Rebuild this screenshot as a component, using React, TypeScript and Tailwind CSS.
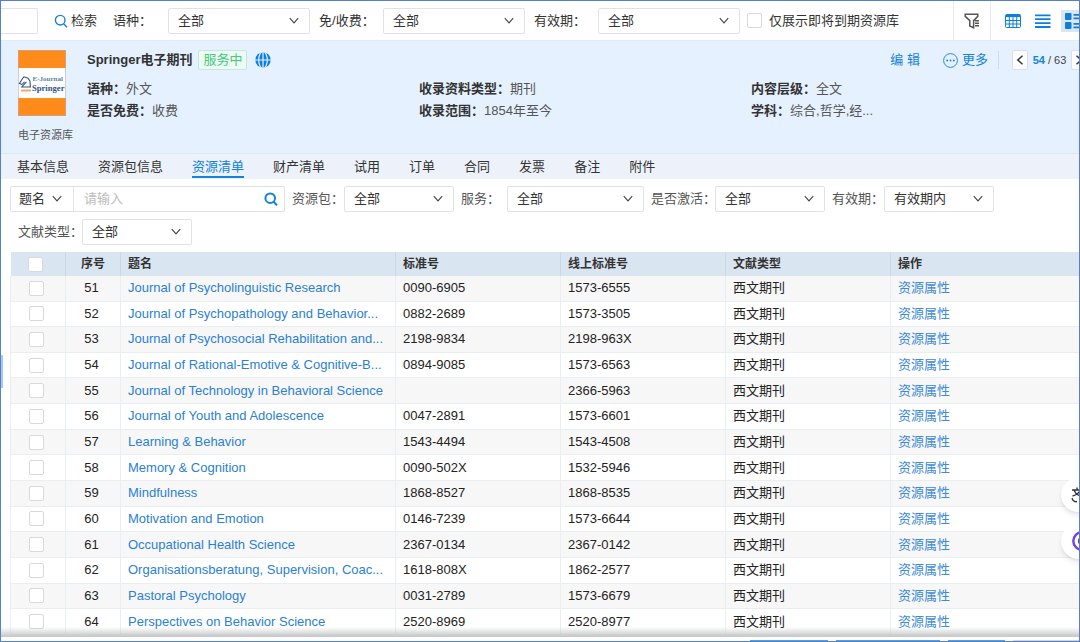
import { Fragment, type ReactNode } from "react";

interface Journal {
  no: number;
  title: string;
  issn: string;
  eissn: string;
}

const journals: Journal[] = [
  { no: 51, title: "Journal of Psycholinguistic Research", issn: "0090-6905", eissn: "1573-6555" },
  { no: 52, title: "Journal of Psychopathology and Behavior...", issn: "0882-2689", eissn: "1573-3505" },
  { no: 53, title: "Journal of Psychosocial Rehabilitation and...", issn: "2198-9834", eissn: "2198-963X" },
  { no: 54, title: "Journal of Rational-Emotive & Cognitive-B...", issn: "0894-9085", eissn: "1573-6563" },
  { no: 55, title: "Journal of Technology in Behavioral Science", issn: "", eissn: "2366-5963" },
  { no: 56, title: "Journal of Youth and Adolescence", issn: "0047-2891", eissn: "1573-6601" },
  { no: 57, title: "Learning & Behavior", issn: "1543-4494", eissn: "1543-4508" },
  { no: 58, title: "Memory & Cognition", issn: "0090-502X", eissn: "1532-5946" },
  { no: 59, title: "Mindfulness", issn: "1868-8527", eissn: "1868-8535" },
  { no: 60, title: "Motivation and Emotion", issn: "0146-7239", eissn: "1573-6644" },
  { no: 61, title: "Occupational Health Science", issn: "2367-0134", eissn: "2367-0142" },
  { no: 62, title: "Organisationsberatung, Supervision, Coac...", issn: "1618-808X", eissn: "1862-2577" },
  { no: 63, title: "Pastoral Psychology", issn: "0031-2789", eissn: "1573-6679" },
  { no: 64, title: "Perspectives on Behavior Science", issn: "2520-8969", eissn: "2520-8977" },
];

const tabs = ["基本信息", "资源包信息", "资源清单", "财产清单", "试用", "订单", "合同", "发票", "备注", "附件"];

const details = [
  ["语种：", "外文"],
  ["收录资料类型：", "期刊"],
  ["内容层级：", "全文"],
  ["是否免费：", "收费"],
  ["收录范围：", "1854年至今"],
  ["学科：", "综合,哲学,经..."],
];

function Chevron() {
  return (
    <svg className="pointer-events-none absolute top-1/2 right-[11px] h-2.5 w-2.5 -translate-y-1/2" viewBox="0 0 10 10" fill="none" stroke="#444" strokeWidth="1.1">
      <path d="M.8 2.2 5 6.9 9.2 2.2" />
    </svg>
  );
}

function SearchIcon({ bold = false }: { bold?: boolean }) {
  return (
    <svg className="h-3.5 w-3.5" viewBox="0 0 14 14" fill="none" stroke="#1283dc" strokeWidth={bold ? 2 : 1.4}>
      <circle cx="6.2" cy="6.2" r="4.8" />
      <path d="m9.6 9.8 3.4 3.4" />
    </svg>
  );
}

function Field({
  id,
  label,
  value = "全部",
  labelClass,
  selectClass,
}: {
  id: string;
  label: string;
  value?: string;
  labelClass: string;
  selectClass: string;
}) {
  return (
    <div className="flex shrink-0 items-center">
      <label htmlFor={id} className={`shrink-0 whitespace-nowrap ${labelClass}`}>
        {label}
      </label>
      <div className={`relative ${selectClass}`}>
        <select id={id} className="block h-[26px] w-full appearance-none rounded-xs border border-[#e2e2e2] bg-white px-[9px] text-[#333] outline-none">
          <option>{value}</option>
        </select>
        <Chevron />
      </div>
    </div>
  );
}

function Check({ id, label }: { id: string; label?: string }) {
  return (
    <input
      id={id}
      type="checkbox"
      aria-label={label}
      className="block h-[15px] w-[15px] shrink-0 appearance-none rounded-xs border border-[#d9d9d9] bg-white checked:bg-[#1283dc]"
    />
  );
}

function Cover() {
  return (
    <svg className="h-[66px] w-12" viewBox="0 0 48 66">
      <rect width="48" height="66" fill="#ff8c1a" />
      <rect y="18" width="48" height="30" fill="#fff" />
      <rect x=".5" y=".5" width="47" height="65" fill="none" stroke="#b9a9b8" strokeOpacity=".6" />
      <g fill="none" stroke="#2f5487" strokeWidth="1.1">
        <path d="M4 34.5 1.5 33.5 4.5 28.5 6 26.8 10 28.2 12 31.2 12.4 37H3.8L8.4 31.8" />
        <path d="M4 34.5 6.5 31.8" />
      </g>
      <rect x="3" y="39.5" width="10" height="2" fill="#f5a765" />
      <text x="14.5" y="31" fontFamily="Liberation Serif, serif" fontSize="7" fontWeight="700" fill="#5d7fa8">
        E-Journal
      </text>
      <text x="14" y="40.5" fontFamily="Liberation Serif, serif" fontSize="8.6" fontWeight="700" fill="#2f5487">
        Springer
      </text>
    </svg>
  );
}

function Toolbar() {
  return (
    <div className="flex h-10 items-center border-b border-[#e6ebf0]">
      <input aria-label="检索" className="h-[26px] w-[37px] shrink-0 rounded-r-xs border border-l-0 border-[#e2e2e2]" />
      <button className="ml-4 flex shrink-0 items-center gap-[3px]">
        <SearchIcon />
        检索
      </button>
      <div className="ml-4 flex gap-[9px]">
        <Field id="language" label="语种：" labelClass="w-[55px]" selectClass="w-[142px]" />
        <Field id="fee" label="免/收费：" labelClass="w-16" selectClass="w-[142px]" />
        <Field id="validity" label="有效期：" labelClass="w-16" selectClass="w-[142px]" />
      </div>
      <div className="ml-[7px] flex shrink-0 items-center gap-[7px]">
        <Check id="expiring" />
        <label htmlFor="expiring">仅展示即将到期资源库</label>
      </div>
      <div className="ml-auto flex h-full shrink-0 items-center">
        <button aria-label="筛选" className="flex h-full w-[38px] items-center justify-center border-x border-[#e6ebf0]">
          <svg className="h-4 w-4" viewBox="0 0 16 16" fill="none" stroke="#555" strokeWidth="1.5">
            <path d="M1.2 1.2h12.6v2.2L9.6 7.6v7.2L5.8 13V7.6L1.2 3.4Z" />
            <path d="M11 7.8h4M11 10.3h4M11 12.8h4" strokeWidth="1.4" />
          </svg>
        </button>
        <button aria-label="表格" className="ml-3.5">
          <svg className="h-4 w-4" viewBox="0 0 16 16" fill="none" stroke="#0f7fdc">
            <rect x=".5" y="1.5" width="15" height="13" rx="1" />
            <path d="M1 2.8h14" strokeWidth="2.6" />
            <path d="M.5 7.5h15M.5 11h15M4.3 4v10.5M8 4v10.5M11.7 4v10.5" />
          </svg>
        </button>
        <button aria-label="列表" className="ml-3.5">
          <svg className="h-4 w-4" viewBox="0 0 16 16" stroke="#0f7fdc" strokeWidth="1.8">
            <path d="M0 2.3h15.5M0 6.2h15.5M0 10.1h15.5M0 14h15.5" />
          </svg>
        </button>
        <button aria-label="卡片" className="ml-2.5 flex h-[22px] w-[26px] items-center bg-[#dbe6f1] pl-1">
          <svg className="h-4 w-5" viewBox="0 0 20 16" fill="#0f7fdc">
            <rect width="6.5" height="7" rx="1" />
            <rect y="9" width="6.5" height="7" rx="1" />
            <path d="M8.5 1h11v1.7h-11zM8.5 4.5h11v1.7h-11zM8.5 10h11v1.7h-11zM8.5 13.5h11v1.7h-11z" />
          </svg>
        </button>
      </div>
    </div>
  );
}

function PageButton({ label, children }: { label: string; children: ReactNode }) {
  return (
    <button aria-label={label} className="flex h-5 w-4 items-center justify-center rounded-xs border border-[#dcdfe3] bg-white">
      <svg className="h-2.5 w-2" viewBox="0 0 8 10" fill="none" stroke="#333" strokeWidth="1.5">
        {children}
      </svg>
    </button>
  );
}

function Summary() {
  return (
    <div className="flex h-28 bg-[#e5f1fe] pt-[9px] pl-[17px]">
      <div className="w-[69px] shrink-0">
        <Cover />
        <p className="mt-[11px] text-[11px] leading-4 whitespace-nowrap text-[#555]">电子资源库</p>
      </div>
      <div className="min-w-0 flex-1">
        <div className="flex h-5 items-center">
          <h1 className="font-bold">Springer电子期刊</h1>
          <span className="ml-1.5 rounded-xs border border-[#bdeed3] bg-[#effaf5] px-1 leading-[18px] text-[#3fcb80]">服务中</span>
          <svg className="ml-2 h-4 w-4" viewBox="0 0 16 16">
            <circle cx="8" cy="8" r="7.7" fill="#0f7fdc" />
            <g fill="none" stroke="#e5f1fe" strokeWidth="1.2">
              <ellipse cx="8" cy="8" rx="4.3" ry="8.6" />
              <path d="M8 0v16M0 8h16" />
            </g>
          </svg>
          <div className="ml-auto flex items-center text-[#1283dc]">
            <button>编 辑</button>
            <button className="ml-[23px] flex items-center gap-1">
              <svg className="h-[15px] w-[15px]" viewBox="0 0 15 15" fill="#1283dc">
                <circle cx="7.5" cy="7.5" r="6.9" fill="none" stroke="#1283dc" strokeWidth=".9" />
                <circle cx="4.2" cy="7.5" r=".9" />
                <circle cx="7.5" cy="7.5" r=".9" />
                <circle cx="10.8" cy="7.5" r=".9" />
              </svg>
              更多
            </button>
            <div className="mr-[13px] ml-2.5 h-[18px] w-px bg-[#d3dde8]" />
            <PageButton label="上一个">
              <path d="M6.5.8 1.8 5l4.7 4.2" />
            </PageButton>
            <span className="w-[43px] text-center text-[11px] text-[#444]">
              <b className="text-[#1283dc]">54</b> / 63
            </span>
            <PageButton label="下一个">
              <path d="M1.5.8 6.2 5 1.5 9.2" />
            </PageButton>
          </div>
        </div>
        <dl className="mt-[9px] grid grid-cols-3 gap-y-0.5 pr-1 leading-5">
          {details.map(([name, value]) => (
            <div key={name} className="flex">
              <dt className="font-bold">{name}</dt>
              <dd className="text-[#555]">{value}</dd>
            </div>
          ))}
        </dl>
      </div>
    </div>
  );
}

function Tabs() {
  return (
    <nav className="flex h-[26px] gap-[29px] border-t border-[#e0e8ef] bg-[#edf2fa] pl-4">
      {tabs.map((tab) => (
        <a
          key={tab}
          href="#"
          className={
            tab === "资源清单"
              ? "h-6 border-b-2 border-[#1283dc] leading-[26px] text-[#1283dc]"
              : "h-6 leading-[26px]"
          }
        >
          {tab}
        </a>
      ))}
    </nav>
  );
}

function Filters() {
  return (
    <div className="flex flex-wrap gap-y-[7px] pt-[7px] pl-[9px] text-[#555]">
      <div className="mr-[7px] flex h-[26px] w-[275px] rounded-xs border border-[#e2e2e2]">
        <div className="relative w-[63px] border-r border-[#e2e2e2]">
          <select aria-label="检索字段" className="h-full w-full appearance-none px-2 text-[#333] outline-none">
            <option>题名</option>
          </select>
          <Chevron />
        </div>
        <input aria-label="题名" placeholder="请输入" className="min-w-0 flex-1 px-2.5 outline-none placeholder:text-[#bbb]" />
        <button aria-label="搜索" className="px-1.5">
          <SearchIcon bold />
        </button>
      </div>
      <Field id="package" label="资源包：" labelClass="w-[52px]" selectClass="mr-[7px] w-[110px]" />
      <Field id="service" label="服务：" labelClass="w-[46px]" selectClass="mr-[7px] w-[137px]" />
      <Field id="active" label="是否激活：" labelClass="w-16" selectClass="mr-[7px] w-[110px]" />
      <Field id="period" label="有效期：" value="有效期内" labelClass="w-[52px]" selectClass="mr-[7px] w-[110px]" />
      <div className="pl-2">
        <Field id="doc-type" label="文献类型：" labelClass="w-16" selectClass="w-[110px]" />
      </div>
    </div>
  );
}

function JournalTable() {
  return (
    <div className="pt-[7px] pl-[9px]">
      <table className="h-[383px] w-full table-fixed border-collapse text-left text-[#222]">
        <colgroup>
          <col className="w-[55px]" />
          <col className="w-[55px]" />
          <col className="w-[275px]" />
          <col className="w-[165px]" />
          <col className="w-[165px]" />
          <col className="w-[165px]" />
          <col />
        </colgroup>
        <thead className="bg-[#d9e5f0] text-xs text-[#333]">
          <tr className="h-6 [&>th]:border-r [&>th]:border-[#cbd9e6] [&>th]:px-[7px] [&>th]:font-bold">
            <th>
              <div className="flex justify-center pr-1">
                <Check id="all" label="全选" />
              </div>
            </th>
            <th className="text-center">序号</th>
            <th>题名</th>
            <th>标准号</th>
            <th>线上标准号</th>
            <th>文献类型</th>
            <th>操作</th>
          </tr>
        </thead>
        <tbody>
          {journals.map((j) => (
            <tr
              key={j.no}
              className="border-b border-[#e8eef2] odd:bg-[#f7f7f7] [&>td]:border-x [&>td]:border-[#e8eef2] [&>td]:px-[7px] [&>td]:leading-5"
            >
              <td>
                <div className="flex justify-center pr-[3px]">
                  <Check id={`row-${j.no}`} label={j.title} />
                </div>
              </td>
              <td>
                <div className="pr-[3px] text-center">{j.no}</div>
              </td>
              <td className="whitespace-nowrap">
                <a href="#" className="text-[#2b7fd6]">
                  {j.title}
                </a>
              </td>
              <td>{j.issn}</td>
              <td>{j.eissn}</td>
              <td>西文期刊</td>
              <td>
                <a href="#" className="text-[#3d8ad8]">
                  资源属性
                </a>
              </td>
            </tr>
          ))}
        </tbody>
      </table>
    </div>
  );
}

function FloatingTools() {
  return (
    <Fragment>
      <button aria-label="翻译" className="absolute -right-4 bottom-[129px] flex h-[34px] w-[34px] items-center rounded-full bg-white pl-2.5 shadow-md">
        <svg className="h-4 w-4" viewBox="0 0 16 16" fill="none" stroke="#333" strokeWidth="1.4">
          <path d="M1 3h10M6 .5V3M2.8 3C4 6 6.5 8 9.5 9M9.2 3C8 6 5 8.3 1.5 9" />
          <path d="M1.2 11q.3 3.8 4.8 3.8" />
        </svg>
      </button>
      <button aria-label="助手" className="absolute -right-[18px] bottom-[82px] flex h-9 w-9 items-center rounded-full bg-white pl-[11px] shadow-md">
        <svg className="h-5 w-5" viewBox="0 0 20 20" fill="none">
          <circle cx="10" cy="10" r="8.7" stroke="#7440e8" strokeWidth="2.4" />
          <ellipse cx="7.5" cy="10" rx="1.4" ry="3" fill="#333" />
        </svg>
      </button>
    </Fragment>
  );
}

function ActionBar() {
  return (
    <div className="absolute inset-x-0 bottom-0">
      <div className="h-2.5 bg-linear-to-b from-transparent to-[#c4c6c6]" />
      <div className="flex h-1 items-end justify-end gap-2 bg-white">
        <span className="h-px w-[78px] bg-[#4da3e6]" />
        <span className="h-px w-[104px] bg-[#4da3e6]" />
        <span className="h-px w-[57px] bg-[#4da3e6]" />
        <span className="h-px w-[66px] bg-[#d5d5d5]" />
      </div>
    </div>
  );
}

export default function App() {
  return (
    <div className="relative h-screen overflow-hidden border border-[#5580cc] bg-white font-['Liberation_Sans','Noto_Sans_CJK_SC',sans-serif] text-[13px] text-[#333]">
      <main className="-mr-2">
        <Toolbar />
        <Summary />
        <Tabs />
        <Filters />
        <JournalTable />
      </main>
      <FloatingTools />
      <ActionBar />
      <div className="absolute top-[354px] left-0 h-[33px] w-0.5 bg-[#a5c9f0]" />
    </div>
  );
}
